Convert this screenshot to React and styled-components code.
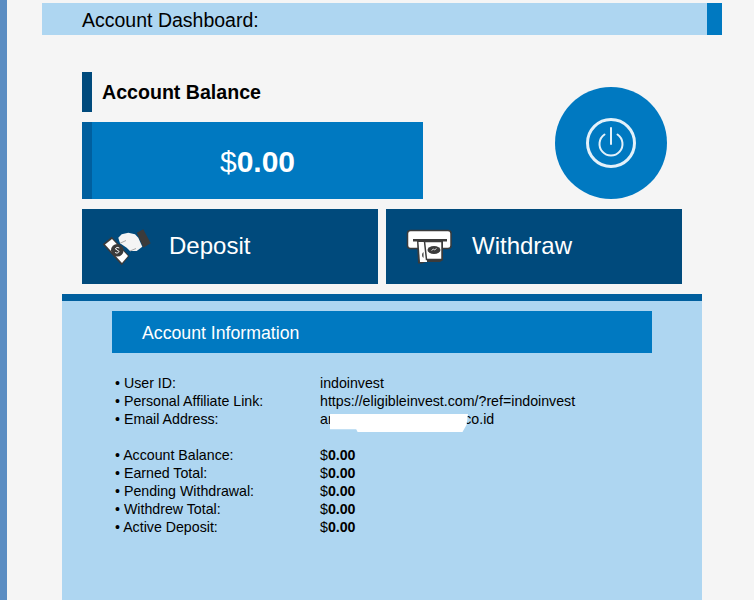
import React from 'react';
import styled, { createGlobalStyle } from 'styled-components';

const GlobalStyle = createGlobalStyle`
  html, body {
    margin: 0;
    padding: 0;
    height: 600px;
    overflow: hidden;
    background: #f5f5f5;
    font-family: "Liberation Sans", Arial, sans-serif;
    color: #000;
  }
`;

const Page = styled.div`
  height: 600px;
  border-left: 7px solid #5b8dc2;
  box-sizing: border-box;
  padding: 3px 32px 0 35px;
  overflow: hidden;
`;

const TopBar = styled.div`
  height: 32px;
  box-sizing: border-box;
  background: #aed6f1;
  border-right: 15px solid #0079c1;
  padding-left: 40px;
  font-size: 19.5px;
  line-height: 34px;
`;

const Dashboard = styled.div`
  padding: 37px 40px 0;
`;

const BalanceRow = styled.div`
  display: flex;
  justify-content: space-between;
  height: 127px;
`;

const BalanceColumn = styled.div`
  width: 341px;
`;

const SectionTitle = styled.h2`
  margin: 0 0 10px;
  height: 40px;
  border-left: 10px solid #004a7c;
  padding-left: 10px;
  font-size: 19.6px;
  line-height: 40px;
`;

const BalanceBox = styled.div`
  height: 77px;
  box-sizing: border-box;
  background: #0079c1;
  border-left: 10px solid #005f9e;
  color: #fff;
  font-size: 30px;
  line-height: 80px;
  text-align: center;
`;

const Amount = styled.b`
  font-weight: 700;
`;

const LogoutButton = styled.a`
  display: flex;
  align-items: center;
  justify-content: center;
  width: 112px;
  height: 112px;
  margin: 15px 15px 0 0;
  border-radius: 50%;
  background: #0079c1;
`;

const Actions = styled.div`
  display: flex;
  gap: 8px;
  margin-top: 10px;
`;

const ActionButton = styled.a`
  display: flex;
  align-items: center;
  width: 296px;
  height: 75px;
  background: #004a7c;
  color: #fff;
  font-size: 24px;
  padding: 0 0 2px 20px;
  box-sizing: border-box;
  svg {
    flex: none;
    margin-top: 2px;
    margin-right: ${(p) => p.$gap}px;
  }
`;

const InfoPanel = styled.section`
  margin: 10px 20px 0;
  height: 320px;
  background: #aed6f1;
  border-top: 7px solid #005f9e;
  padding: 10px 50px 0;
`;

const InfoTitle = styled.h3`
  margin: 0;
  height: 42px;
  background: #0079c1;
  color: #fff;
  font-size: 17.7px;
  font-weight: 400;
  line-height: 44px;
  padding-left: 30px;
`;

const InfoList = styled.dl`
  margin: 21px 0 0 3px;
  display: grid;
  grid-template-columns: 205px 1fr;
  grid-auto-rows: 18px;
  font-size: 14.2px;
  line-height: 18px;
`;

const Label = styled.dt`
  grid-column: 1;
  &::before {
    content: "• ";
  }
`;

const Value = styled.dd`
  grid-column: 2;
  margin: 0;
`;

const Spacer = styled.div`
  grid-column: 1 / -1;
`;

const Email = styled.span`
  position: relative;
`;

const Redaction = styled.i`
  position: absolute;
  left: 10px;
  top: 3px;
  width: 138px;
  height: 18px;
  background: #fff;
  clip-path: polygon(0 0, 100% 0, 99% 60%, 96% 100%, 20% 100%, 19% 85%, 0 85%);
`;

const HiddenPart = styled.span`
  visibility: hidden;
`;

function PowerIcon() {
  return (
    <svg width="50" height="50" viewBox="0 0 50 50" fill="none" stroke="#e3f1fa" strokeLinecap="round">
      <circle cx="25" cy="25" r="23.5" strokeWidth="3" />
      <path d="M18.500 16.500a11.500 11.500 0 1 0 13 0" strokeWidth="2" />
      <path d="M25 10v16" strokeWidth="2" />
    </svg>
  );
}

function DepositIcon() {
  return (
    <svg width="50" height="40" viewBox="0 0 50 40">
      <path d="M34.700 5.700 41.300 2.300 48.700 16.300 41.300 20.700Z" fill="#3b3b3b" />
      <path d="M.7 17.300 9.700 9.700 27.300 29 19.700 38.300Z" fill="#3b3b3b" />
      <path d="M3 17.500 10 12 26 29 20 36Z" fill="#fff" />
      <circle cx="15.300" cy="23.300" r="6.300" fill="#3b3b3b" />
      <path d="M17.300 21a2.800 2.800 0 0 0-4 .8l3.800 2.600a2.500 2.500 0 0 1-4 1" fill="none" stroke="#fff" strokeWidth="1" />
      <path d="M16.300 10.700 19.700 7.300 26.300 5.700 33 7.300 36.300 10.700 40.300 19.700 34.700 24H28L24.700 20.700 18 16.300Z" fill="#f4f4f4" />
      <path d="M18 16.300 24 13.500M28 24 34 21.500" fill="none" stroke="#a9a9a9" strokeWidth="1" />
    </svg>
  );
}

function WithdrawIcon() {
  return (
    <svg width="46" height="38" viewBox="0 0 46 38">
      <rect x="1.500" y="2.500" width="43.500" height="18" rx="3" fill="#fff" stroke="#3b3b3b" strokeWidth="1.500" />
      <rect x="7" y="11" width="34" height="2.500" fill="#3b3b3b" />
      <path d="M11 13H37V32L34 34H20L16 35.500H12Z" fill="#3b3b3b" />
      <path d="M12.500 14H21V34H14Z" fill="#fff" />
      <path d="M18.500 13.500H36V31.500H20.500Z" fill="#fff" stroke="#3b3b3b" strokeWidth="1.500" />
      <ellipse cx="28" cy="22" rx="6.500" ry="4" fill="#3b3b3b" />
      <path d="M25.500 22.500l2-1.500 1 1 2-1.500" fill="none" stroke="#fff" strokeWidth=".8" />
      <path d="M17.500 24a3 3.500 0 0 0 0 6Z" fill="#3b3b3b" />
    </svg>
  );
}

const rows = [
  ['Account Balance:', '0.00'],
  ['Earned Total:', '0.00'],
  ['Pending Withdrawal:', '0.00'],
  ['Withdrew Total:', '0.00'],
  ['Active Deposit:', '0.00'],
];

export default function App() {
  return (
    <>
      <GlobalStyle />
      <Page>
        <TopBar>Account Dashboard:</TopBar>
        <Dashboard>
          <BalanceRow>
            <BalanceColumn>
              <SectionTitle>Account Balance</SectionTitle>
              <BalanceBox>$<Amount>0.00</Amount></BalanceBox>
            </BalanceColumn>
            <LogoutButton>
              <PowerIcon />
            </LogoutButton>
          </BalanceRow>
          <Actions>
            <ActionButton $gap={17}>
              <DepositIcon />
              Deposit
            </ActionButton>
            <ActionButton $gap={20}>
              <WithdrawIcon />
              Withdraw
            </ActionButton>
          </Actions>
        </Dashboard>
        <InfoPanel>
          <InfoTitle>Account Information</InfoTitle>
          <InfoList>
            <Label>User ID:</Label>
            <Value>indoinvest</Value>
            <Label>Personal Affiliate Link:</Label>
            <Value>https://eligibleinvest.com/?ref=indoinvest</Value>
            <Label>Email Address:</Label>
            <Value>
              <Email>
                ar<HiddenPart>xxxxxxxxxxxxxxxxxx</HiddenPart>.co.id
                <Redaction />
              </Email>
            </Value>
            <Spacer />
            {rows.map(([label, amount]) => (
              <React.Fragment key={label}>
                <Label>{label}</Label>
                <Value>$<Amount>{amount}</Amount></Value>
              </React.Fragment>
            ))}
          </InfoList>
        </InfoPanel>
      </Page>
    </>
  );
}
